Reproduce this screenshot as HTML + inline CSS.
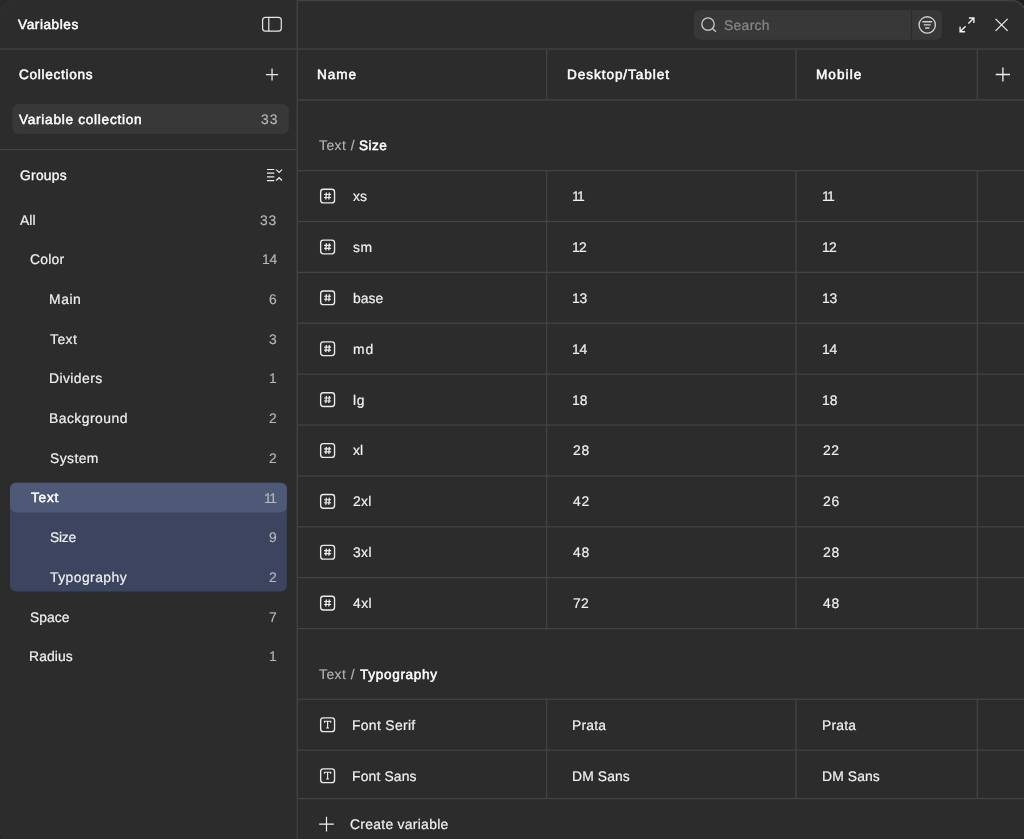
<!DOCTYPE html>
<html lang="en"><head><meta charset="utf-8"><title>Variables</title>
<style>
*{box-sizing:border-box;margin:0;padding:0}
html,body{width:1024px;height:839px;overflow:hidden;background:#2c2c2c}
body{position:relative;font-family:"Liberation Sans",sans-serif}
#win{position:absolute;left:0;top:0;width:1024px;height:839px;overflow:hidden}
#geo{position:absolute;left:0;top:0;display:block}
.t{position:absolute;white-space:nowrap;line-height:24px;height:24px;will-change:transform;text-rendering:geometricPrecision}
.r{font-size:13.9px;color:#f1f1f1;-webkit-text-stroke:0.19px #f1f1f1}
.b{font-size:13.6px;color:#ffffff;-webkit-text-stroke:0.5px #ffffff}
.m{font-size:13.8px;color:#f8f8f8;-webkit-text-stroke:0.36px #f8f8f8}
.c{font-size:13.9px;color:#b9b9b9;-webkit-text-stroke:0.14px #b9b9b9}
.g{font-size:13.9px;color:#b4b4b4;-webkit-text-stroke:0.14px #b4b4b4}
.p{font-size:13.9px;color:#878787;-webkit-text-stroke:0.24px #878787}
</style></head><body><div id="win">
<svg id="geo" width="1024" height="839" viewBox="0 0 1024 839">
<rect x="0" y="0" width="1024" height="839" fill="#1e1e1e"/>
<path d="M0 839V0H1012.0A14 14 0 0 1 1026.0 14V839Z" fill="#2c2c2c"/>
<path d="M297.84 0.6H1012.0A13.4 13.4 0 0 1 1025.4 14" fill="none" stroke="#414141" stroke-width="1.2"/>
<path d="M0 0H13A13 13 0 0 0 0 13Z" fill="#292929"/>
<path d="M0 839V835.8A3.2 3.2 0 0 0 1.6 839Z" fill="#222222"/>
<path d="M0 13.5A13.5 13.5 0 0 1 13.5 0" fill="none" stroke="#313131" stroke-width="1"/>
<rect x="12.40" y="104.00" width="276.50" height="30.00" rx="6.2" fill="#383838"/>
<rect x="9.95" y="482.80" width="276.95" height="108.80" rx="6.2" fill="#3c4460"/>
<rect x="9.95" y="482.80" width="276.95" height="29.60" rx="6.2" fill="#4d5977"/>
<rect x="694.00" y="9.95" width="248.00" height="29.80" rx="6.2" fill="#383838"/>
<rect x="910.90" y="9.95" width="1.24" height="29.80" fill="#2c2c2c"/>
<rect x="0.00" y="48.40" width="1024.00" height="1.24" fill="#444444"/>
<rect x="0.00" y="148.92" width="296.60" height="1.24" fill="#444444"/>
<rect x="297.84" y="99.28" width="726.16" height="1.24" fill="#444444"/>
<rect x="297.84" y="170.02" width="726.16" height="1.24" fill="#444444"/>
<rect x="297.84" y="220.90" width="726.16" height="1.24" fill="#444444"/>
<rect x="297.84" y="271.78" width="726.16" height="1.24" fill="#444444"/>
<rect x="297.84" y="322.66" width="726.16" height="1.24" fill="#444444"/>
<rect x="297.84" y="373.54" width="726.16" height="1.24" fill="#444444"/>
<rect x="297.84" y="424.42" width="726.16" height="1.24" fill="#444444"/>
<rect x="297.84" y="475.30" width="726.16" height="1.24" fill="#444444"/>
<rect x="297.84" y="526.18" width="726.16" height="1.24" fill="#444444"/>
<rect x="297.84" y="577.07" width="726.16" height="1.24" fill="#444444"/>
<rect x="297.84" y="698.68" width="726.16" height="1.24" fill="#444444"/>
<rect x="297.84" y="749.56" width="726.16" height="1.24" fill="#444444"/>
<rect x="297.84" y="627.95" width="726.16" height="1.24" fill="#444444"/>
<rect x="296.60" y="0.00" width="1.24" height="839.00" fill="#444444"/>
<rect x="546.04" y="49.64" width="1.24" height="49.64" fill="#444444"/>
<rect x="795.48" y="49.64" width="1.24" height="49.64" fill="#444444"/>
<rect x="976.67" y="49.64" width="1.24" height="49.64" fill="#444444"/>
<rect x="546.04" y="171.26" width="1.24" height="456.69" fill="#444444"/>
<rect x="795.48" y="171.26" width="1.24" height="456.69" fill="#444444"/>
<rect x="976.67" y="171.26" width="1.24" height="456.69" fill="#444444"/>
<rect x="546.04" y="699.92" width="1.24" height="98.04" fill="#444444"/>
<rect x="795.48" y="699.92" width="1.24" height="98.04" fill="#444444"/>
<rect x="976.67" y="699.92" width="1.24" height="98.04" fill="#444444"/>
<rect x="297.84" y="799.20" width="726.16" height="39.80" fill="#2c2c2c"/>
<rect x="297.84" y="797.96" width="726.16" height="1.24" fill="#444444"/>
<g fill="none" stroke="#e6e6e6" stroke-width="1.2" ><rect x="262.6" y="17.3" width="18.7" height="13.9" rx="2.9"/><path d="M268.8 17.3v13.9"/></g>
<g fill="none" stroke="#ececec" stroke-width="1.25" ><path d="M272.05 68.4v12.2M265.95 74.5h12.2"/></g>
<g fill="none" stroke="#ececec" stroke-width="1.2" ><path d="M267 169.5h7.3M267 173.2h7.3M267 176.9h7.3M267 180.6h7.3"/><path d="M276.2 169.6l2.9 2.8 2.9-2.8M276.2 180.5l2.9-2.8 2.9 2.8"/></g>
<g fill="none" stroke="#c6c6c6" stroke-width="1.35" ><circle cx="708" cy="24.05" r="6.2"/><path d="M712.5 28.5l3.35 3.35"/></g>
<g fill="none" stroke="#d2d2d2" stroke-width="1.3" ><circle cx="927.25" cy="24.9" r="8.15" stroke-width="1.35"/><path d="M922.4 21.75h9.7M923.8 24.85h6.9M925.1 27.95h4.3" stroke-width="1.45"/></g>
<g fill="none" stroke="#f4f4f4" stroke-width="1.35" ><path d="M968.9 17.95h5v5M973.9 17.95l-5.5 5.5M965.1 31.75h-5v-5M960.1 31.75l5.5-5.5"/></g>
<g fill="none" stroke="#f0f0f0" stroke-width="1.2" ><path d="M995.55 18.8l12.1 12.1M1007.65 18.8l-12.1 12.1"/></g>
<g fill="none" stroke="#f0f0f0" stroke-width="1.3" ><path d="M1002.9 67.4v14.2M995.8 74.5h14.2"/></g>
<g fill="none" stroke="#f0f0f0" stroke-width="1.2" ><path d="M326.5 816.8v14.7M319.15 824.15h14.7"/></g>
<g fill="none" stroke="#ebebeb" stroke-width="1.2" ><rect x="320.65" y="189.23" width="13.9" height="13.7" rx="2.7" stroke-width="1.35"/><path d="M326.40 192.48l-0.6 7.00M329.40 192.48l-0.6 7.00" stroke-width="1.35"/><path d="M324.10 194.48h7.00M324.10 197.48h7.00" stroke-width="1.1"/></g>
<g fill="none" stroke="#ebebeb" stroke-width="1.2" ><rect x="320.65" y="240.11" width="13.9" height="13.7" rx="2.7" stroke-width="1.35"/><path d="M326.40 243.36l-0.6 7.00M329.40 243.36l-0.6 7.00" stroke-width="1.35"/><path d="M324.10 245.36h7.00M324.10 248.36h7.00" stroke-width="1.1"/></g>
<g fill="none" stroke="#ebebeb" stroke-width="1.2" ><rect x="320.65" y="290.99" width="13.9" height="13.7" rx="2.7" stroke-width="1.35"/><path d="M326.40 294.24l-0.6 7.00M329.40 294.24l-0.6 7.00" stroke-width="1.35"/><path d="M324.10 296.24h7.00M324.10 299.24h7.00" stroke-width="1.1"/></g>
<g fill="none" stroke="#ebebeb" stroke-width="1.2" ><rect x="320.65" y="341.87" width="13.9" height="13.7" rx="2.7" stroke-width="1.35"/><path d="M326.40 345.12l-0.6 7.00M329.40 345.12l-0.6 7.00" stroke-width="1.35"/><path d="M324.10 347.12h7.00M324.10 350.12h7.00" stroke-width="1.1"/></g>
<g fill="none" stroke="#ebebeb" stroke-width="1.2" ><rect x="320.65" y="392.75" width="13.9" height="13.7" rx="2.7" stroke-width="1.35"/><path d="M326.40 396.00l-0.6 7.00M329.40 396.00l-0.6 7.00" stroke-width="1.35"/><path d="M324.10 398.00h7.00M324.10 401.00h7.00" stroke-width="1.1"/></g>
<g fill="none" stroke="#ebebeb" stroke-width="1.2" ><rect x="320.65" y="443.63" width="13.9" height="13.7" rx="2.7" stroke-width="1.35"/><path d="M326.40 446.88l-0.6 7.00M329.40 446.88l-0.6 7.00" stroke-width="1.35"/><path d="M324.10 448.88h7.00M324.10 451.88h7.00" stroke-width="1.1"/></g>
<g fill="none" stroke="#ebebeb" stroke-width="1.2" ><rect x="320.65" y="494.51" width="13.9" height="13.7" rx="2.7" stroke-width="1.35"/><path d="M326.40 497.76l-0.6 7.00M329.40 497.76l-0.6 7.00" stroke-width="1.35"/><path d="M324.10 499.76h7.00M324.10 502.76h7.00" stroke-width="1.1"/></g>
<g fill="none" stroke="#ebebeb" stroke-width="1.2" ><rect x="320.65" y="545.40" width="13.9" height="13.7" rx="2.7" stroke-width="1.35"/><path d="M326.40 548.65l-0.6 7.00M329.40 548.65l-0.6 7.00" stroke-width="1.35"/><path d="M324.10 550.65h7.00M324.10 553.65h7.00" stroke-width="1.1"/></g>
<g fill="none" stroke="#ebebeb" stroke-width="1.2" ><rect x="320.65" y="596.28" width="13.9" height="13.7" rx="2.7" stroke-width="1.35"/><path d="M326.40 599.53l-0.6 7.00M329.40 599.53l-0.6 7.00" stroke-width="1.35"/><path d="M324.10 601.53h7.00M324.10 604.53h7.00" stroke-width="1.1"/></g>
<g fill="none" stroke="#ebebeb" stroke-width="1.2" ><rect x="320.65" y="717.89" width="13.9" height="13.7" rx="2.7" stroke-width="1.35"/><path d="M324.50 722.74v-1.5h6.2v1.5M327.60 721.24v6.8M326.10 728.04h3" stroke-width="1.15"/></g>
<g fill="none" stroke="#ebebeb" stroke-width="1.2" ><rect x="320.65" y="768.88" width="13.9" height="13.7" rx="2.7" stroke-width="1.35"/><path d="M324.50 773.73v-1.5h6.2v1.5M327.60 772.23v6.8M326.10 779.03h3" stroke-width="1.15"/></g>
</svg>
<div class="t b" style="left:18.35px;top:13px;letter-spacing:0.579px">Variables</div>
<div class="t b" style="left:19.35px;top:63px;letter-spacing:0.701px">Collections</div>
<div class="t b" style="left:19.25px;top:108px;letter-spacing:0.736px">Variable collection</div>
<div class="t c" style="left:261.37px;top:107px;letter-spacing:1.035px">33</div>
<div class="t m" style="left:20.43px;top:164px;letter-spacing:0.289px">Groups</div>
<div class="t r" style="left:20.09px;top:208px;letter-spacing:0.105px">All</div>
<div class="t c" style="left:260.47px;top:208px;letter-spacing:0.835px">33</div>
<div class="t r" style="left:30.09px;top:247px;letter-spacing:0.210px">Color</div>
<div class="t c" style="left:261.57px;top:247px;letter-spacing:-0.265px">14</div>
<div class="t r" style="left:49.39px;top:287px;letter-spacing:0.576px">Main</div>
<div class="t c" style="left:269.03px;top:287px;letter-spacing:0.000px">6</div>
<div class="t r" style="left:50.39px;top:327px;letter-spacing:0.465px">Text</div>
<div class="t c" style="left:269.03px;top:327px;letter-spacing:0.000px">3</div>
<div class="t r" style="left:49.39px;top:366px;letter-spacing:0.426px">Dividers</div>
<div class="t c" style="left:269.43px;top:366px;letter-spacing:0.000px">1</div>
<div class="t r" style="left:49.39px;top:406px;letter-spacing:0.478px">Background</div>
<div class="t c" style="left:269.03px;top:406px;letter-spacing:0.000px">2</div>
<div class="t r" style="left:50.39px;top:446px;letter-spacing:0.414px">System</div>
<div class="t c" style="left:269.03px;top:446px;letter-spacing:0.000px">2</div>
<div class="t b" style="left:30.55px;top:486px;letter-spacing:0.816px">Text</div>
<div class="t c" style="left:263.77px;top:486px;letter-spacing:-1.434px">11</div>
<div class="t r" style="left:50.39px;top:525px;letter-spacing:-0.295px">Size</div>
<div class="t c" style="left:269.03px;top:525px;letter-spacing:0.000px">9</div>
<div class="t r" style="left:50.39px;top:565px;letter-spacing:0.452px">Typography</div>
<div class="t c" style="left:269.03px;top:565px;letter-spacing:0.000px">2</div>
<div class="t r" style="left:30.39px;top:605px;letter-spacing:0.012px">Space</div>
<div class="t c" style="left:269.03px;top:605px;letter-spacing:0.000px">7</div>
<div class="t r" style="left:29.39px;top:644px;letter-spacing:0.103px">Radius</div>
<div class="t c" style="left:269.43px;top:644px;letter-spacing:0.000px">1</div>
<div class="t p" style="left:723.72px;top:13px;letter-spacing:0.315px">Search</div>
<div class="t b" style="left:317.35px;top:63px;letter-spacing:0.900px">Name</div>
<div class="t b" style="left:566.85px;top:63px;letter-spacing:0.928px">Desktop/Tablet</div>
<div class="t b" style="left:816.45px;top:63px;letter-spacing:1.043px">Mobile</div>
<div class="t g" style="left:318.67px;top:133px;letter-spacing:0.465px">Text /</div>
<div class="t b" style="left:358.95px;top:134px;letter-spacing:0.439px">Size</div>
<div class="t g" style="left:318.67px;top:662px;letter-spacing:0.465px">Text /</div>
<div class="t b" style="left:359.95px;top:663px;letter-spacing:0.674px">Typography</div>
<div class="t r" style="left:353.00px;top:184px;letter-spacing:-0.035px">xs</div>
<div class="t r" style="left:571.80px;top:184px;letter-spacing:-1.584px">11</div>
<div class="t r" style="left:822.00px;top:184px;letter-spacing:-1.584px">11</div>
<div class="t r" style="left:352.80px;top:235px;letter-spacing:0.665px">sm</div>
<div class="t r" style="left:571.80px;top:235px;letter-spacing:-0.715px">12</div>
<div class="t r" style="left:822.00px;top:235px;letter-spacing:-0.715px">12</div>
<div class="t r" style="left:353.10px;top:286px;letter-spacing:0.071px">base</div>
<div class="t r" style="left:571.80px;top:286px;letter-spacing:-0.215px">13</div>
<div class="t r" style="left:822.00px;top:286px;letter-spacing:-0.215px">13</div>
<div class="t r" style="left:352.80px;top:337px;letter-spacing:1.039px">md</div>
<div class="t r" style="left:571.80px;top:337px;letter-spacing:-0.115px">14</div>
<div class="t r" style="left:822.00px;top:337px;letter-spacing:-0.115px">14</div>
<div class="t r" style="left:353.00px;top:388px;letter-spacing:0.724px">lg</div>
<div class="t r" style="left:571.80px;top:388px;letter-spacing:-0.015px">18</div>
<div class="t r" style="left:822.00px;top:388px;letter-spacing:-0.015px">18</div>
<div class="t r" style="left:352.90px;top:438px;letter-spacing:0.065px">xl</div>
<div class="t r" style="left:572.80px;top:438px;letter-spacing:0.885px">28</div>
<div class="t r" style="left:823.00px;top:438px;letter-spacing:0.585px">22</div>
<div class="t r" style="left:353.00px;top:489px;letter-spacing:0.270px">2xl</div>
<div class="t r" style="left:572.80px;top:489px;letter-spacing:0.885px">42</div>
<div class="t r" style="left:823.00px;top:489px;letter-spacing:0.785px">26</div>
<div class="t r" style="left:353.00px;top:540px;letter-spacing:0.370px">3xl</div>
<div class="t r" style="left:572.80px;top:540px;letter-spacing:0.885px">48</div>
<div class="t r" style="left:823.00px;top:540px;letter-spacing:0.885px">28</div>
<div class="t r" style="left:352.90px;top:591px;letter-spacing:0.470px">4xl</div>
<div class="t r" style="left:572.80px;top:591px;letter-spacing:0.385px">72</div>
<div class="t r" style="left:823.00px;top:591px;letter-spacing:0.885px">48</div>
<div class="t r" style="left:352.20px;top:713px;letter-spacing:0.328px">Font Serif</div>
<div class="t r" style="left:571.80px;top:713px;letter-spacing:0.221px">Prata</div>
<div class="t r" style="left:822.00px;top:713px;letter-spacing:0.221px">Prata</div>
<div class="t r" style="left:352.20px;top:764px;letter-spacing:0.155px">Font Sans</div>
<div class="t r" style="left:571.80px;top:764px;letter-spacing:0.105px">DM Sans</div>
<div class="t r" style="left:822.00px;top:764px;letter-spacing:0.105px">DM Sans</div>
<div class="t r" style="left:350.30px;top:812px;letter-spacing:0.289px">Create variable</div>
</div></body></html>
